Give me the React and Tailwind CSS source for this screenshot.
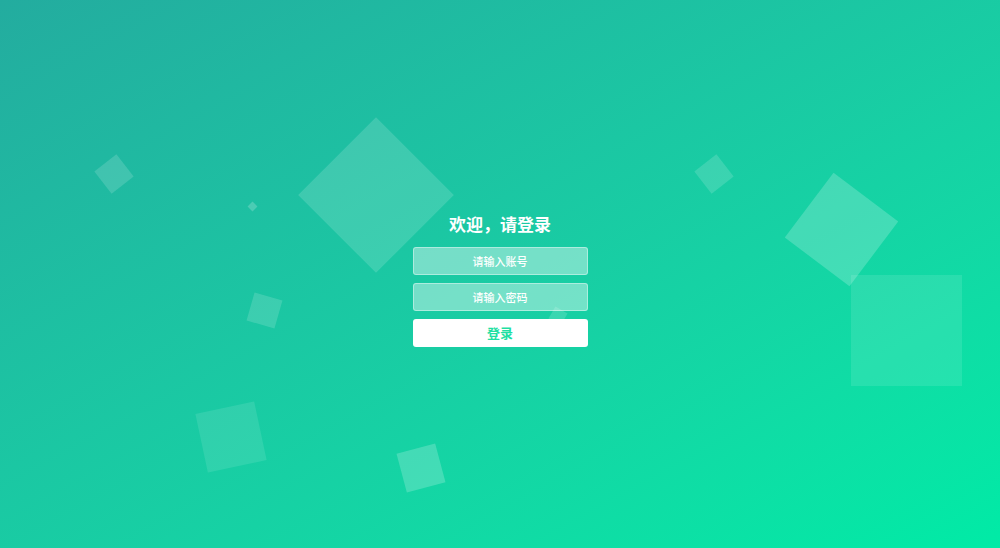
import React from "react";

const squares = [
  "left-[100px] top-[160px] w-[28px] h-[28px] rotate-[52deg] bg-white/15",
  "left-[249px] top-[203px] w-[7px] h-[7px] rotate-45 bg-white/20",
  "left-[321px] top-[140px] w-[110px] h-[110px] rotate-45 bg-white/15",
  "left-[250px] top-[296px] w-[29px] h-[29px] rotate-[16deg] bg-white/15",
  "left-[201px] top-[407px] w-[60px] h-[60px] -rotate-[12deg] bg-white/10",
  "left-[401px] top-[448px] w-[40px] h-[40px] -rotate-[15deg] bg-white/20",
  "left-[700px] top-[160px] w-[28px] h-[28px] rotate-[52deg] bg-white/15",
  "left-[801px] top-[189px] w-[81px] h-[81px] rotate-[37deg] bg-white/20",
  "left-[851px] top-[275px] w-[111px] h-[111px] bg-white/10",
  "left-[551px] top-[309px] w-[14px] h-[14px] rotate-[30deg] bg-white/15",
];

export default function App() {
  return (
    <div
      className="relative w-full h-[548px] overflow-hidden bg-gradient-to-br from-[#23ac9f] to-[#00eba6]"
      style={{ fontFamily: '"Noto Sans CJK SC", "Noto Sans", sans-serif' }}
    >
      {/* Background squares */}
      {squares.map((cls, i) => (
        <div key={i} className={`absolute ${cls}`} />
      ))}

      {/* Login form */}
      <div className="relative flex flex-col items-center pt-[210px]">
        <h1 className="text-[17px] leading-[28px] font-bold text-white mb-[9px]">
          欢迎，请登录
        </h1>
        <form className="flex flex-col gap-[8px] w-[175px]">
          <input
            type="text"
            placeholder="请输入账号"
            className="h-[28px] w-full rounded-[3px] border border-white/40 bg-white/40 text-center text-[11px] font-medium text-white placeholder:text-white outline-none"
          />
          <input
            type="password"
            placeholder="请输入密码"
            className="h-[28px] w-full rounded-[3px] border border-white/40 bg-white/40 text-center text-[11px] font-medium text-white placeholder:text-white outline-none"
          />
          <button
            type="button"
            className="h-[28px] w-full rounded-[3px] bg-white text-[13px] font-bold text-[#1fdfa3] leading-[26px]"
          >
            登录
          </button>
        </form>
      </div>
    </div>
  );
}
